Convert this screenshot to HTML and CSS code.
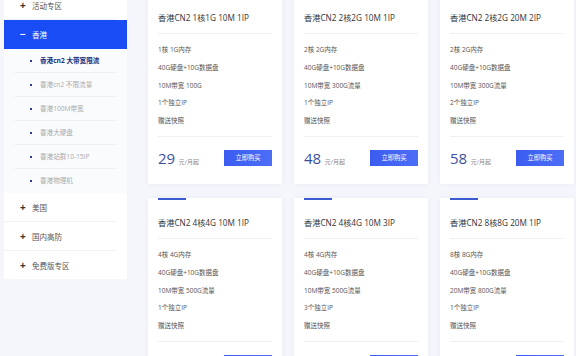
FILE: index.html
```html
<!DOCTYPE html>
<html lang="zh-CN">
<head>
    <meta charset="UTF-8">
    <meta name="viewport" content="width=device-width, initial-scale=1.0">
    <title>香港云服务器</title>
    <link rel="stylesheet" href="styles.css">
</head>
<body>

    <div class="layout">
        <!-- ▼ 左侧分类菜单 ▼ -->
        <ul class="side-menu">
            <li class="menu-item"><span class="sign">+</span>活动专区</li>
            <li class="menu-item active"><span class="sign">−</span>香港</li>
            <li class="sub-menu">
                <ul>
                    <li class="current">香港cn2 大带宽限流</li>
                    <li>香港cn2 不限流量</li>
                    <li>香港100M带宽</li>
                    <li>香港大硬盘</li>
                    <li>香港站群10-15IP</li>
                    <li>香港物理机</li>
                </ul>
            </li>
            <li class="menu-item"><span class="sign">+</span>美国</li>
            <li class="menu-item"><span class="sign">+</span>国内高防</li>
            <li class="menu-item last"><span class="sign">+</span>免费版专区</li>
        </ul>
        <!-- ▲ 左侧分类菜单 ▲ -->

        <div class="product-list">
            <div class="card">
                <div class="card-bar"></div>
                <h3>香港CN2 1核1G 10M 1IP</h3>
                <ul class="spec">
                    <li>1核 1G内存</li>
                    <li>40G硬盘+10G数据盘</li>
                    <li>10M带宽 100G</li>
                    <li>1个独立IP</li>
                    <li>赠送快照</li>
                </ul>
                <div class="card-foot">
                    <p class="price"><b>29</b> 元/月起</p>
                    <button>立即购买</button>
                </div>
            </div>

            <div class="card">
                <div class="card-bar"></div>
                <h3>香港CN2 2核2G 10M 1IP</h3>
                <ul class="spec">
                    <li>2核 2G内存</li>
                    <li>40G硬盘+10G数据盘</li>
                    <li>10M带宽 300G流量</li>
                    <li>1个独立IP</li>
                    <li>赠送快照</li>
                </ul>
                <div class="card-foot">
                    <p class="price"><b>48</b> 元/月起</p>
                    <button>立即购买</button>
                </div>
            </div>

            <div class="card">
                <div class="card-bar"></div>
                <h3>香港CN2 2核2G 20M 2IP</h3>
                <ul class="spec">
                    <li>2核 2G内存</li>
                    <li>40G硬盘+10G数据盘</li>
                    <li>10M带宽 300G流量</li>
                    <li>2个独立IP</li>
                    <li>赠送快照</li>
                </ul>
                <div class="card-foot">
                    <p class="price"><b>58</b> 元/月起</p>
                    <button>立即购买</button>
                </div>
            </div>

            <div class="card">
                <div class="card-bar"></div>
                <h3>香港CN2 4核4G 10M 1IP</h3>
                <ul class="spec">
                    <li>4核 4G内存</li>
                    <li>40G硬盘+10G数据盘</li>
                    <li>10M带宽 500G流量</li>
                    <li>1个独立IP</li>
                    <li>赠送快照</li>
                </ul>
                <div class="card-foot">
                    <p class="price"><b>78</b> 元/月起</p>
                    <button>立即购买</button>
                </div>
            </div>

            <div class="card">
                <div class="card-bar"></div>
                <h3>香港CN2 4核4G 10M 3IP</h3>
                <ul class="spec">
                    <li>4核 4G内存</li>
                    <li>40G硬盘+10G数据盘</li>
                    <li>10M带宽 500G流量</li>
                    <li>3个独立IP</li>
                    <li>赠送快照</li>
                </ul>
                <div class="card-foot">
                    <p class="price"><b>98</b> 元/月起</p>
                    <button>立即购买</button>
                </div>
            </div>

            <div class="card">
                <div class="card-bar"></div>
                <h3>香港CN2 8核8G 20M 1IP</h3>
                <ul class="spec">
                    <li>8核 8G内存</li>
                    <li>40G硬盘+10G数据盘</li>
                    <li>20M带宽 800G流量</li>
                    <li>1个独立IP</li>
                    <li>赠送快照</li>
                </ul>
                <div class="card-foot">
                    <p class="price"><b>168</b> 元/月起</p>
                    <button>立即购买</button>
                </div>
            </div>
        </div>
    </div>

</body>
</html>
```

FILE: styles.css
```css
body {
    font-family: "Open Sans", "Noto Sans CJK SC", sans-serif;
    margin: 0;
    padding: 0;
    background: #f5f6fb;
    color: #333;
    overflow: hidden;
}

ul {
    list-style: none;
    margin: 0;
    padding: 0;
}

/* page is shown scrolled down a little */
.layout {
    display: flex;
    align-items: flex-start;
    margin-top: -9px;
    padding-left: 4px;
}

/* ---------- side menu ---------- */
.side-menu {
    width: 123px;
    flex-shrink: 0;
    background: #fff;
}

.menu-item {
    display: flex;
    align-items: center;
    height: 28px;
    padding-left: 16px;
    font-size: 7.5px;
    color: #555;
    border-bottom: 1px solid #f0f1f5;
    margin: 0 10px 0 0;
}

.menu-item.last {
    border-bottom: none;
}

.menu-item .sign {
    width: 12px;
    font-size: 10px;
    font-weight: bold;
    color: #333;
    line-height: 1;
}

.menu-item.active {
    background: #1a4cf6;
    color: #fff;
    margin: 0;
    border-bottom: 1px solid #1a4cf6;
}

.menu-item.active .sign {
    color: #fff;
}

.sub-menu {
    background: #fafbfd;
    padding: 0 10px;
}

.sub-menu li {
    position: relative;
    box-sizing: border-box;
    height: 24px;
    line-height: 23px;
    padding-left: 26px;
    font-size: 6.6px;
    color: #aaa;
    border-bottom: 1px solid #f0f1f5;
}

.sub-menu li:last-child {
    border-bottom: none;
}

.sub-menu li::before {
    content: "";
    position: absolute;
    left: 16px;
    top: 11px;
    width: 2px;
    height: 2px;
    background: #2a3b8f;
}

.sub-menu li.current {
    color: #23307a;
    font-weight: bold;
}

/* ---------- product cards ---------- */
.product-list {
    display: grid;
    grid-template-columns: repeat(3, 134px);
    column-gap: 12px;
    row-gap: 14px;
    margin-left: 21px;
    margin-top: 2px;
}

.card {
    background: #fff;
    padding: 0 10px;
    height: 191px;
    box-sizing: border-box;
    box-shadow: 0 0 6px rgba(40, 60, 140, 0.05);
}

.card-bar {
    width: 28px;
    height: 2px;
    background: #3d5bd0;
}

.card h3 {
    margin: 15px 0 0;
    padding-bottom: 7px;
    font-size: 8.2px;
    line-height: 16px;
    font-weight: normal;
    color: #333;
    border-bottom: 1px solid #f0f0f3;
}

.spec {
    padding: 7px 0 6px;
    border-bottom: 1px solid #f0f0f3;
}

.spec li {
    font-size: 6.5px;
    line-height: 17.75px;
    color: #555;
}

.card-foot {
    display: flex;
    align-items: center;
    justify-content: space-between;
    padding-top: 11px;
}

.price {
    margin: 0;
    font-size: 6px;
    color: #888;
}

.price b {
    font-size: 15px;
    font-weight: normal;
    color: #3d4f9f;
    margin-right: 2px;
}

.card-foot button {
    flex: none;
    width: 48px;
    height: 16px;
    padding: 0;
    border: none;
    background: linear-gradient(90deg, #3b5cf0, #4c6ef6);
    color: #fff;
    font-family: "Noto Sans CJK SC", sans-serif;
    font-size: 6.3px;
    cursor: pointer;
}
```
